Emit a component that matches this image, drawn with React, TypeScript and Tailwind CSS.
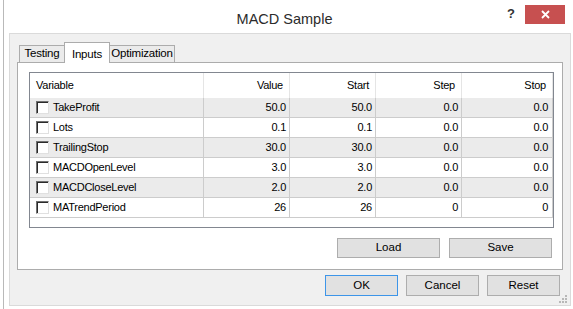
const rows = [
  { name: "TakeProfit", value: "50.0", start: "50.0", step: "0.0", stop: "0.0" },
  { name: "Lots", value: "0.1", start: "0.1", step: "0.0", stop: "0.0" },
  { name: "TrailingStop", value: "30.0", start: "30.0", step: "0.0", stop: "0.0" },
  { name: "MACDOpenLevel", value: "3.0", start: "3.0", step: "0.0", stop: "0.0" },
  { name: "MACDCloseLevel", value: "2.0", start: "2.0", step: "0.0", stop: "0.0" },
  { name: "MATrendPeriod", value: "26", start: "26", step: "0", stop: "0" },
];

function CheckBox() {
  return (
    <div className="w-[13px] h-[13px] border-t border-l border-[#707070] border-r border-b border-r-[#e0e0e0] border-b-[#e0e0e0] bg-white">
      <div className="w-full h-full border-t border-l border-[#2a2a2a]" />
    </div>
  );
}

function Button({ label, w, h, focused }: { label: string; w: string; h: string; focused?: boolean }) {
  return (
    <div
      className={`${w} ${h} flex items-center justify-center border bg-[#e1e1e1] text-[11.5px] text-black ${
        focused ? "border-[#3d95e8]" : "border-[#adadad]"
      }`}
    >
      {label}
    </div>
  );
}

function Gripper() {
  return (
    <svg width="8" height="8" viewBox="0 0 8 8" className="absolute right-[3px] bottom-[2px]">
      {[
        [6, 0],
        [3, 3],
        [6, 3],
        [0, 6],
        [3, 6],
        [6, 6],
      ].map(([x, y], i) => (
        <rect key={i} x={x} y={y} width="2" height="2" fill="#b8b8b8" />
      ))}
    </svg>
  );
}

export default function App() {
  return (
    <div className="w-[573px] h-[309px] bg-white overflow-hidden font-['Liberation_Sans',Arial,sans-serif] text-black">
      <div className="ml-[3px] h-full border-l border-[#b9b9b9] flex flex-col">
        {/* title bar */}
        <div className="h-[33px] flex items-start bg-white">
          <div className="flex-1" />
          <div className="pt-[10px] text-[14.5px] text-[#2b2b2b] leading-[18px]">MACD Sample</div>
          <div className="flex-1 flex justify-end items-start pr-[8px]">
            <div className="mt-[7px] mr-[10px] text-[13px] font-bold text-[#333] leading-[14px]">?</div>
            <div className="mt-[5px] w-[40px] h-[19px] bg-[#c75050] flex items-center justify-center">
              <svg width="9" height="9" viewBox="0 0 9 9">
                <path d="M1 1 L8 8 M8 1 L1 8" stroke="white" strokeWidth="1.8" />
              </svg>
            </div>
          </div>
        </div>

        {/* client area */}
        <div className="ml-[5px] w-[562px] h-[273px] border border-[#dadada] bg-[#f0f0f0] relative">
          <div className="pl-[7px] pt-[8px]">
            {/* tabs */}
            <div className="flex items-end h-[20px] pl-[2px] text-[11.5px] tracking-[-0.2px]">
              <div className="w-[45px] h-[17px] border-l border-t border-[#acacac] bg-[#ebebeb] flex items-center justify-center">
                Testing
              </div>
              <div className="w-[46px] h-[21px] -mb-px border-l border-r border-t border-[#acacac] bg-white flex items-start justify-center pt-[3px] relative z-10">
                Inputs
              </div>
              <div className="w-[65px] h-[17px] border-r border-t border-[#acacac] bg-[#ebebeb] flex items-center justify-center">
                Optimization
              </div>
            </div>

            {/* panel */}
            <div className="w-[546px] h-[208px] border border-[#acacac] bg-white pt-[9px]">
              <div className="ml-[11px] w-[525px] h-[156px] border border-[#828790] bg-white text-[11px] tracking-[-0.25px]">
                <div className="flex h-[25px]">
                  {[
                    ["Variable", "w-[174px] justify-start pl-[6px]"],
                    ["Value", "w-[86px] justify-end pr-[6px]"],
                    ["Start", "w-[86px] justify-end pr-[6px]"],
                    ["Step", "w-[86px] justify-end pr-[6px]"],
                    ["Stop", "w-[91px] justify-end pr-[6px]"],
                  ].map(([t, c]) => (
                    <div key={t} className={`${c} flex items-center border-r border-[#e5e5e5]`}>
                      {t}
                    </div>
                  ))}
                </div>
                {rows.map((r, i) => (
                  <div
                    key={r.name}
                    className={`flex h-[20px] border-b border-[#cccccc] ${i % 2 === 0 ? "bg-[#ebebeb]" : "bg-white"}`}
                  >
                    <div className="w-[174px] flex items-center pl-[6px] gap-[4px] border-r border-[#cccccc]">
                      <CheckBox />
                      <span>{r.name}</span>
                    </div>
                    <div className="w-[86px] flex items-center justify-end pr-[3px] border-r border-[#cccccc]">{r.value}</div>
                    <div className="w-[86px] flex items-center justify-end pr-[3px] border-r border-[#cccccc]">{r.start}</div>
                    <div className="w-[86px] flex items-center justify-end pr-[3px] border-r border-[#cccccc]">{r.step}</div>
                    <div className="w-[91px] flex items-center justify-end pr-[4px] border-r border-[#cccccc]">{r.stop}</div>
                  </div>
                ))}
              </div>
              <div className="flex justify-end gap-[9px] pr-[10px] mt-[10px]">
                <Button label="Load" w="w-[103px]" h="h-[20px]" />
                <Button label="Save" w="w-[103px]" h="h-[20px]" />
              </div>
            </div>
          </div>

          {/* bottom buttons */}
          <div className="flex justify-end gap-[8px] pr-[10px] mt-[5px]">
            <Button label="OK" w="w-[73px]" h="h-[21px]" focused />
            <Button label="Cancel" w="w-[73px]" h="h-[21px]" />
            <Button label="Reset" w="w-[73px]" h="h-[21px]" />
          </div>
          <Gripper />
        </div>
      </div>
    </div>
  );
}
